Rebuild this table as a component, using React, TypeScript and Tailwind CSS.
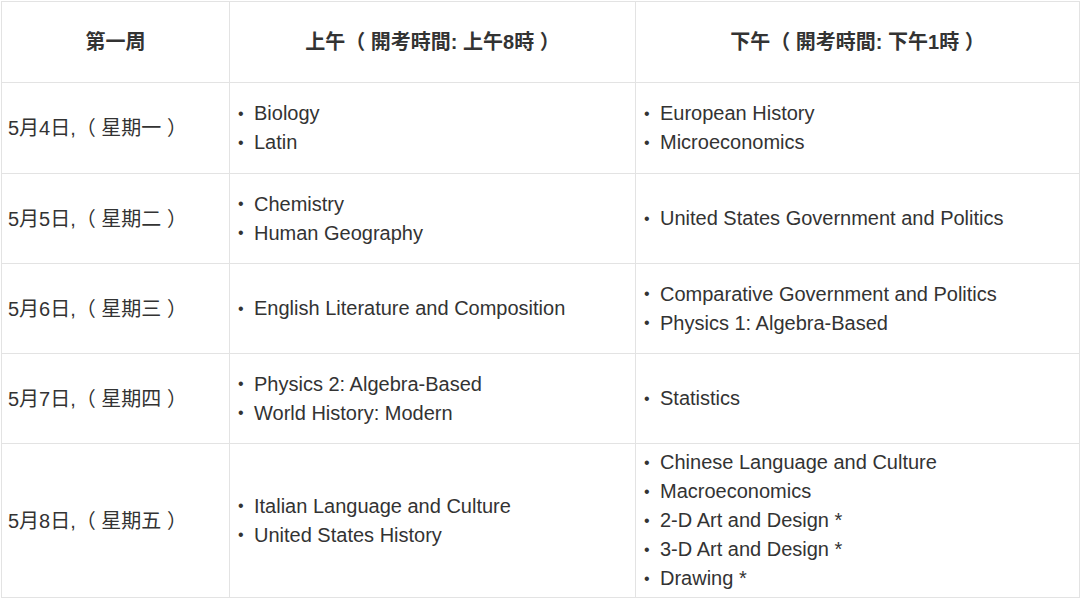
type Row = { date: string; am: string[]; pm: string[]; h: string };

const rows: Row[] = [
  { date: "5月4日,（ 星期一 ）", am: ["Biology", "Latin"], pm: ["European History", "Microeconomics"], h: "h-[91px]" },
  { date: "5月5日,（ 星期二 ）", am: ["Chemistry", "Human Geography"], pm: ["United States Government and Politics"], h: "h-[90px]" },
  { date: "5月6日,（ 星期三 ）", am: ["English Literature and Composition"], pm: ["Comparative Government and Politics", "Physics 1: Algebra-Based"], h: "h-[90px]" },
  { date: "5月7日,（ 星期四 ）", am: ["Physics 2: Algebra-Based", "World History: Modern"], pm: ["Statistics"], h: "h-[90px]" },
  {
    date: "5月8日,（ 星期五 ）",
    am: ["Italian Language and Culture", "United States History"],
    pm: ["Chinese Language and Culture", "Macroeconomics", "2-D Art and Design *", "3-D Art and Design *", "Drawing *"],
    h: "h-[154px]",
  },
];

function Bullets({ items }: { items: string[] }) {
  return (
    <ul className="flex flex-col">
      {items.map((t) => (
        <li key={t} className="flex items-center h-[29px]">
          <span className="w-[16px] shrink-0 text-[16px] leading-none">•</span>
          <span className="leading-[29px]">{t}</span>
        </li>
      ))}
    </ul>
  );
}

export default function App() {
  return (
    <div className="bg-white w-[1080px] h-[599px] pt-px pl-px font-['Liberation_Sans','Noto_Sans_CJK_TC',sans-serif] text-[#333]">
      <table className="w-[1078px] table-fixed border-collapse text-[20px]">
        <colgroup>
          <col className="w-[228px]" />
          <col className="w-[406px]" />
          <col className="w-[444px]" />
        </colgroup>
        <thead>
          <tr className="h-[81px]">
            <th className="border border-[#e3e3e3] text-center align-middle text-[20px] font-bold">第一周</th>
            <th className="border border-[#e3e3e3] text-center align-middle text-[20px] font-bold">上午（ 開考時間: 上午8時 ）</th>
            <th className="border border-[#e3e3e3] text-center align-middle text-[20px] font-bold">下午（ 開考時間: 下午1時 ）</th>
          </tr>
        </thead>
        <tbody>
          {rows.map((r) => (
            <tr key={r.date} className={r.h}>
              <td className="border border-[#e3e3e3] align-middle px-[6px]">{r.date}</td>
              <td className="border border-[#e3e3e3] align-middle pl-[8px]">
                <Bullets items={r.am} />
              </td>
              <td className="border border-[#e3e3e3] align-middle pl-[8px]">
                <Bullets items={r.pm} />
              </td>
            </tr>
          ))}
        </tbody>
      </table>
    </div>
  );
}
